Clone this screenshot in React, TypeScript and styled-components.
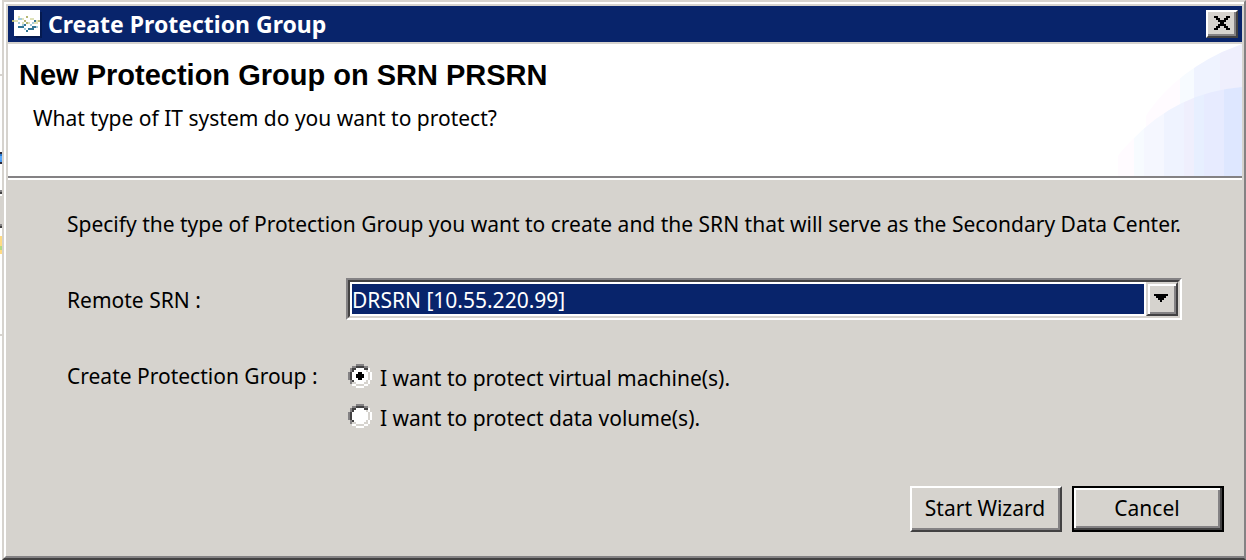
import React, { useState } from "react";
import styled, { createGlobalStyle, css } from "styled-components";

const face = "#d6d3ce";
const shade = "#848284";
const dark = "#424142";
const navy = "#08246b";

const GlobalStyle = createGlobalStyle`
  * { box-sizing: border-box; }
  body {
    margin: 0;
    background: #ffffff;
    color: #000000;
    font-family: "Noto Sans", "Open Sans", sans-serif;
    font-size: 21px;
    line-height: 28px;
  }
  button, select, input { font: inherit; color: inherit; margin: 0; }
`;

const Desktop = styled.div`
  display: flex;
  min-height: 100vh;
`;

const BackgroundEdge = styled.div`
  flex: 0 0 2px;
  background: linear-gradient(
    #ffffff 74px, ${face} 74px 76px, #ffffff 76px 152px,
    #29283a 152px 154px, #2979ce 154px 156px, #5aaaff 156px 160px, #4a9af0 160px 162px, #29283a 162px 164px,
    #ffffff 164px 190px, ${shade} 190px 192px, ${dark} 192px 194px, #ffffff 194px 196px,
    ${face} 196px 224px, ${shade} 224px 226px, ${dark} 226px 228px, #ffffff 228px 236px,
    #ffdb84 236px 246px, #b5db84 246px 250px, #ffdb84 250px 254px,
    #ffffff 254px 334px, ${face} 334px 336px, #ffffff 336px
  );
`;

const WindowFrame = styled.div`
  flex: 1;
  display: flex;
  border: 2px solid;
  border-color: ${face} ${shade} ${dark} ${face};
`;

const Dialog = styled.section`
  flex: 1;
  display: flex;
  flex-direction: column;
  border-style: solid;
  border-width: 2px 0 2px 2px;
  border-color: #ffffff ${shade} ${shade} #ffffff;
`;

const DialogInner = styled.div`
  flex: 1;
  display: flex;
  flex-direction: column;
  border: 2px solid ${face};
  background: ${face};
`;

const TitleBar = styled.header`
  display: flex;
  align-items: center;
  gap: 6px;
  height: 36px;
  padding: 0 4px 0 6px;
  background: ${navy};
  color: #ffffff;
`;

const TitleText = styled.h1`
  flex: 1;
  margin: 0;
  font-size: 23px;
  line-height: 28px;
  font-weight: 700;
`;

const raised = css`
  border: 2px solid;
  border-color: #ffffff ${dark} ${dark} #ffffff;
  box-shadow: inset -2px -2px 0 ${shade};
  background: ${face};
`;

const CloseButton = styled.button`
  ${raised}
  display: flex;
  width: 32px;
  height: 28px;
  padding: 4px 6px;
`;

const Banner = styled.div`
  display: flex;
  justify-content: space-between;
  height: 136px;
  margin-top: 2px;
  background: #ffffff;
  border-bottom: 2px solid #ffffff;
  box-shadow: inset 0 -2px 0 ${shade};
`;

const BannerText = styled.div`
  padding: 15px 0 0 11px;
`;

const Heading = styled.h2`
  margin: 0;
  font-family: "Liberation Sans", Arial, sans-serif;
  font-size: 29px;
  line-height: 32px;
  font-weight: 700;
`;

const Question = styled.p`
  margin: 13px 0 0 14px;
`;

const Form = styled.form`
  flex: 1;
  display: flex;
  flex-direction: column;
`;

const Fields = styled.div`
  display: grid;
  grid-template-columns: 279px 1fr;
  padding: 30px 60px 0 59px;
`;

const Intro = styled.p`
  grid-column: 1 / -1;
  margin: 0 0 40px;
  white-space: nowrap;
`;

const ComboLabel = styled.label`
  align-self: center;
  padding-top: 2px;
`;

const Combo = styled.div`
  position: relative;
  height: 42px;
  border: 2px solid;
  border-color: ${shade} #ffffff #ffffff ${shade};
`;

const ComboSelect = styled.select`
  appearance: none;
  display: block;
  width: 100%;
  height: 38px;
  padding: 2px 34px 0 2px;
  border: 2px solid;
  border-color: ${dark} ${face} ${face} ${dark};
  border-radius: 0;
  outline: none;
  color: #ffffff;
  background: linear-gradient(${navy}, ${navy}) 2px 2px / calc(100% - 36px) 30px no-repeat padding-box #ffffff;
`;

const ComboArrow = styled.span`
  position: absolute;
  top: 2px;
  right: 2px;
  display: flex;
  align-items: center;
  justify-content: center;
  width: 32px;
  height: 34px;
  padding: 0 2px 2px 0;
  border: 2px solid;
  border-color: ${face} ${dark} ${dark} ${face};
  box-shadow: inset 2px 2px 0 #ffffff, inset -2px -2px 0 ${shade};
  background: ${face};
  pointer-events: none;
`;

const Group = styled.fieldset`
  display: contents;
`;

const GroupLabel = styled.div`
  margin-top: 42px;
`;

const Choices = styled.div`
  display: flex;
  flex-direction: column;
  gap: 12px;
  margin: 44px 0 0 2px;
`;

const Choice = styled.label`
  display: flex;
  align-items: flex-start;
  gap: 8px;
`;

const RadioBox = styled.span`
  display: grid;
  width: 24px;
  height: 24px;
  > * { grid-area: 1 / 1; }
  input { appearance: none; width: 24px; height: 24px; }
  svg { pointer-events: none; }
`;

const Actions = styled.footer`
  display: flex;
  justify-content: flex-end;
  gap: 10px;
  margin-top: auto;
  padding: 0 18px 22px;
`;

const ActionButton = styled.button<{ $default?: boolean }>`
  ${raised}
  width: 152px;
  height: 46px;
  padding: 0 2px 2px 0;
  ${(p) =>
    p.$default &&
    css`
      border-color: #000000;
      box-shadow: inset -2px -2px 0 ${dark}, inset 2px 2px 0 #ffffff, inset -4px -4px 0 ${shade};
    `}
`;

const IconSvg = styled.svg`
  overflow: visible;
`;

const AppIcon = () => (
  <IconSvg width="28" height="28" viewBox="0 0 14 14" shapeRendering="crispEdges" aria-hidden="true">
    <rect x="1" y="1" width="13" height="13" fill="#051a50" />
    <rect width="13" height="13" fill="#ffffff" />
    <path fill="#dfe2b8" d="M2 3h1v1h-1zM4 4h1v1h-1zM8 4h2v1h-2zM0 5h2v1h-2zM11 5h1v1h-1zM7 6h1v1h-1zM10 6h2v1h-2zM4 6h1v1h-1z" />
    <path fill="#b5b573" d="M-1 5h1v1h-1zM6 3h1v1h-1zM5 5h1v1h-1zM6 6h1v1h-1zM12 5h1v1h-1z" />
    <path fill="#a5cbd8" d="M2 4h2v1h-2zM2 6h1v1h-1zM9 6h1v1h-1zM4 7h1v1h-1zM8 7h1v1h-1zM5 9h1v1h-1zM11 8h1v1h-1z" />
    <path fill="#2f7594" d="M5 7h1v1h-1zM2 8h3v1h-3zM10 5h1v1h-1zM9 8h2v1h-2zM7 9h3v1h-3zM6 10h1v1h-1z" />
  </IconSvg>
);

const CloseGlyph = () => (
  <svg width="16" height="14" viewBox="0 0 8 7" shapeRendering="crispEdges" aria-hidden="true">
    <path d="M0 0h2v1h-2zM6 0h2v1h-2zM1 1h2v1h-2zM5 1h2v1h-2zM2 2h4v1h-4zM3 3h2v1h-2zM2 4h4v1h-4zM1 5h2v1h-2zM5 5h2v1h-2zM0 6h2v1h-2zM6 6h2v1h-2z" />
  </svg>
);

const ArrowGlyph = () => (
  <svg width="14" height="8" viewBox="0 0 7 4" shapeRendering="crispEdges" aria-hidden="true">
    <path d="M0 0h7v1h-7zM1 1h5v1h-5zM2 2h3v1h-3zM3 3h1v1h-1z" />
  </svg>
);

const outerBands = [
  [28, 34, "#fffbff"],
  [62, 14, "#f7fbff"],
  [76, 26, "#eff3ff"],
  [102, 22, "#efeffd"],
] as const;

const innerBands = [
  [0, 16, "#fffbff"],
  [16, 10, "#f7fbff"],
  [26, 20, "#f5f7ff"],
  [46, 20, "#eff3ff"],
  [66, 10, "#efeffd"],
  [76, 10, "#e7efff"],
  [86, 20, "#e7ebff"],
  [106, 18, "#dee7ff"],
] as const;

const Swoosh = () => (
  <svg width="124" height="132" viewBox="0 0 124 132" shapeRendering="crispEdges" aria-hidden="true">
    <defs>
      <clipPath id="outer-arc">
        <path d="M124 0L104 8Q50 34 24 78V132H124Z" />
      </clipPath>
      <clipPath id="inner-arc">
        <path d="M124 43Q60 48 14 96Q2 108 0 112V132H124Z" />
      </clipPath>
    </defs>
    <g clipPath="url(#outer-arc)">
      {outerBands.map(([x, w, fill]) => (
        <rect key={x} x={x} width={w} height="132" fill={fill} />
      ))}
    </g>
    <g clipPath="url(#inner-arc)">
      {innerBands.map(([x, w, fill]) => (
        <rect key={x} x={x} width={w} height="132" fill={fill} />
      ))}
    </g>
  </svg>
);

const RadioArt = ({ checked }: { checked: boolean }) => (
  <svg width="24" height="24" viewBox="0 0 12 12" shapeRendering="crispEdges" aria-hidden="true">
    <path fill="#ffffff" d="M4 1h4v1h2v2h1v4h-1v2h-2v1h-4v-1h-2v-2h-1v-4h1v-2h2z" />
    <path fill={shade} d="M4 0h4v1h-4zM2 1h2v1h-2zM8 1h2v1h-2zM1 2h1v2h-1zM0 4h1v4h-1zM1 8h1v2h-1z" />
    <path fill={dark} d="M4 1h4v1h-4zM2 2h2v1h-2zM8 2h2v1h-2zM2 3h1v1h-1zM1 4h1v4h-1zM2 8h1v1h-1z" />
    <path fill={face} d="M9 3h1v1h-1zM10 4h1v4h-1zM9 8h1v1h-1zM8 9h2v1h-2zM2 9h2v1h-2zM4 10h4v1h-4z" />
    <path fill="#ffffff" d="M10 2h1v2h-1zM11 4h1v4h-1zM10 8h1v2h-1zM8 10h2v1h-2zM2 10h2v1h-2zM4 11h4v1h-4z" />
    {checked && <path d="M5 4h2v1h1v2h-1v1h-2v-1h-1v-2h1z" />}
  </svg>
);

const options = [
  { value: "vm", label: "I want to protect virtual machine(s)." },
  { value: "volume", label: "I want to protect data volume(s)." },
];

export default function App() {
  const [kind, setKind] = useState("vm");
  return (
    <Desktop>
      <GlobalStyle />
      <BackgroundEdge />
      <WindowFrame>
        <Dialog>
          <DialogInner>
            <TitleBar>
              <AppIcon />
              <TitleText>Create Protection Group</TitleText>
              <CloseButton type="button" aria-label="Close">
                <CloseGlyph />
              </CloseButton>
            </TitleBar>
            <Banner>
              <BannerText>
                <Heading>New Protection Group on SRN PRSRN</Heading>
                <Question>What type of IT system do you want to protect?</Question>
              </BannerText>
              <Swoosh />
            </Banner>
            <Form onSubmit={(e) => e.preventDefault()}>
              <Fields>
                <Intro>
                  Specify the type of Protection Group you want to create and the SRN that will serve as the Secondary
                  Data Center.
                </Intro>
                <ComboLabel htmlFor="remote-srn">Remote SRN :</ComboLabel>
                <Combo>
                  <ComboSelect id="remote-srn">
                    <option>DRSRN [10.55.220.99]</option>
                  </ComboSelect>
                  <ComboArrow>
                    <ArrowGlyph />
                  </ComboArrow>
                </Combo>
                <Group aria-labelledby="group-kind">
                  <GroupLabel id="group-kind">Create Protection Group :</GroupLabel>
                  <Choices>
                    {options.map((o) => (
                      <Choice key={o.value}>
                        <RadioBox>
                          <input
                            type="radio"
                            name="kind"
                            value={o.value}
                            checked={kind === o.value}
                            onChange={() => setKind(o.value)}
                          />
                          <RadioArt checked={kind === o.value} />
                        </RadioBox>
                        {o.label}
                      </Choice>
                    ))}
                  </Choices>
                </Group>
              </Fields>
              <Actions>
                <ActionButton type="submit">Start Wizard</ActionButton>
                <ActionButton type="button" $default>
                  Cancel
                </ActionButton>
              </Actions>
            </Form>
          </DialogInner>
        </Dialog>
      </WindowFrame>
    </Desktop>
  );
}
